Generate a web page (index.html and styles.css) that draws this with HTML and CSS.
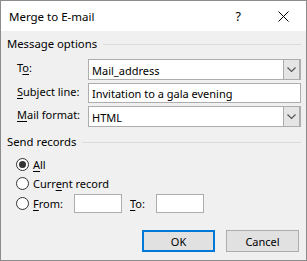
FILE: index.html
```html
<!DOCTYPE html>
<html>
<head>
<meta charset="utf-8">
<link rel="stylesheet" href="styles.css">
</head>
<body>
<div class="dialog">
  <div class="titlebar">
    <span class="title">Merge to E-mail</span>
    <span class="help">?</span>
    <svg class="close" width="11" height="11" viewBox="0 0 11 11"><path d="M0.5 0.5 L10.5 10.5 M10.5 0.5 L0.5 10.5" stroke="#000" stroke-width="1" fill="none"/></svg>
  </div>
  <div class="content">
    <div class="group-head"><span>Message options</span><div class="rule"></div></div>
    <div class="row r-to">
      <span class="label">T<u>o</u>:</span>
      <div class="combo"><span class="val">Mail_address</span><div class="dd"><svg width="9" height="6" viewBox="0 0 9 6"><path d="M0.5 0.5 L4.5 4.5 L8.5 0.5" stroke="#555" stroke-width="1.2" fill="none"/></svg></div></div>
    </div>
    <div class="row r-subj">
      <span class="label"><u>S</u>ubject line:</span>
      <div class="input"><span class="val">Invitation to a gala evening</span></div>
    </div>
    <div class="row r-fmt">
      <span class="label"><u>M</u>ail format:</span>
      <div class="combo"><span class="val">HTML</span><div class="dd"><svg width="9" height="6" viewBox="0 0 9 6"><path d="M0.5 0.5 L4.5 4.5 L8.5 0.5" stroke="#555" stroke-width="1.2" fill="none"/></svg></div></div>
    </div>
    <div class="group-head g2"><span>Send records</span><div class="rule"></div></div>
    <div class="radio-row rr-all"><span class="radio checked"></span><span><u>A</u>ll</span></div>
    <div class="radio-row rr-cur"><span class="radio"></span><span>Curr<u>e</u>nt record</span></div>
    <div class="radio-row rr-from">
      <span class="radio"></span><span class="from-lbl"><u>F</u>rom:</span>
      <div class="small-input"></div>
      <span class="to-lbl"><u>T</u>o:</span>
      <div class="small-input"></div>
    </div>
    <div class="buttons">
      <div class="btn default">OK</div>
      <div class="btn">Cancel</div>
    </div>
  </div>
</div>
</body>
</html>
```
FILE: styles.css
```css
html, body { margin: 0; padding: 0; }
body { font-family: "Noto Sans", "Liberation Sans", sans-serif; font-size: 11px; color: #000; }
u { text-decoration: underline; text-underline-offset: 2px; }
.dialog {
  width: 307px; height: 261px; box-sizing: border-box;
  border: 1px solid #8c8c8c; background: #f0f0f0;
  display: flex; flex-direction: column;
}
.titlebar {
  height: 30px; background: #fff; display: flex; align-items: center;
  padding-left: 8px; flex-shrink: 0;
}
.title { font-size: 11.5px; flex: 1; padding-top: 1px; }
.help { font-size: 12.5px; margin-right: 37px; padding-top: 1px; }
.close { margin-right: 17px; }
.content { padding: 6px 5px 0 6px; display: flex; flex-direction: column; }
.group-head { display: flex; align-items: center; height: 14px; line-height: 14px; font-size: 11.3px; }
.group-head .rule { flex: 1; height: 1px; background: #dcdcdc; margin-left: 6px; }
.g2 { margin-top: 8px; }
.row { display: flex; align-items: center; padding-left: 10px; margin-top: 3px; }
.r-to { margin-top: 8px; }
.label { width: 71px; flex-shrink: 0; align-self: flex-start; padding-top: 1px; }
.combo, .input {
  flex: 1; box-sizing: border-box; background: #fff; border: 1px solid #adadad;
  display: flex; align-items: center;
}
.combo { height: 21px; }
.input { height: 20px; }
.val { flex: 1; padding-left: 3px; white-space: nowrap; padding-top: 1px; }
.dd {
  width: 18px; align-self: stretch; box-sizing: border-box; background: #e5e5e5;
  border: 1px solid #adadad; border-right-width: 2px; margin: -1px -1px -1px 0;
  display: flex; align-items: center; justify-content: center;
}
.radio-row { display: flex; align-items: center; padding-left: 9px; }
.rr-all { margin-top: 6px; height: 18px; }
.rr-cur { margin-top: 1px; height: 18px; }
.rr-from { margin-top: 2px; height: 19px; }
.radio {
  width: 13px; height: 13px; box-sizing: border-box; border: 1px solid #333;
  border-radius: 50%; background: #fff; margin-right: 4px; flex-shrink: 0;
  display: flex; align-items: center; justify-content: center;
}
.radio.checked::after { content: ""; width: 7px; height: 7px; border-radius: 50%; background: #333; }
.from-lbl { width: 41px; }
.to-lbl { width: 26px; margin-left: 8px; }
.small-input { width: 48px; height: 19px; box-sizing: border-box; background: #fff; border: 1px solid #adadad; }
.buttons { display: flex; justify-content: flex-end; gap: 11px; margin-top: 17px; padding-right: 2px; }
.btn {
  width: 73px; height: 22px; box-sizing: border-box; background: #e1e1e1;
  border: 1px solid #adadad; display: flex; align-items: center; justify-content: center;
}
.btn.default { border: 2px solid #0078d7; }
```
